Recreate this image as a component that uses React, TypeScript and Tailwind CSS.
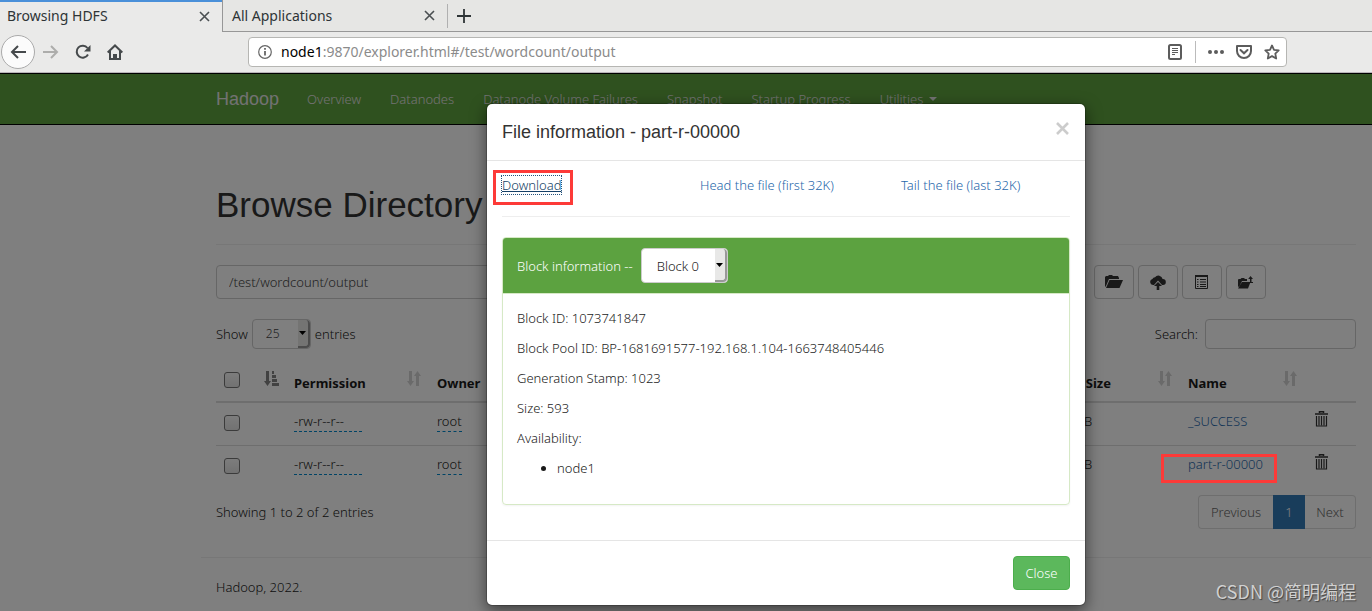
import React from "react";

const navLinks = [
  "Overview",
  "Datanodes",
  "Datanode Volume Failures",
  "Snapshot",
  "Startup Progress",
];

const columns = [
  { title: "Permission", width: "w-[143px]" },
  { title: "Owner", width: "" },
  { title: "Block Size", width: "w-[141px]" },
  { title: "Name", width: "w-[125px]" },
];

const files = [
  { name: "_SUCCESS", marked: false },
  { name: "part-r-00000", marked: true },
];

const blockInfo = [
  "Block ID: 1073741847",
  "Block Pool ID: BP-1681691577-192.168.1.104-1663748405446",
  "Generation Stamp: 1023",
  "Size: 593",
  "Availability:",
];

const SortIcon = ({ active }: { active?: boolean }) =>
  active ? (
    <svg width="15" height="15" viewBox="0 0 15 15" fill="#333" className="opacity-60">
      <path d="M2 0h3v10h2l-3.500 5L0 10h2zM8 0h2v3H8zM8 4h4v3H8zM8 8h5v3H8zM8 12h7v3H8z" />
    </svg>
  ) : (
    <svg width="14" height="15" viewBox="0 0 14 15" fill="#333" className="opacity-20">
      <path d="M2 0h3v10h2l-3.500 5L0 10h2zM9 15h3V5h2l-3.500-5L7 5h2z" />
    </svg>
  );

const TrashIcon = () => (
  <svg width="13" height="16" viewBox="0 0 13 16" fill="none" stroke="#333">
    <path d="M4.500 2V.75h4V2" strokeWidth="1.500" />
    <path d="M0 3h13" strokeWidth="1.500" />
    <path d="M1.500 5v10h10V5" strokeWidth="1.200" />
    <path d="M4 5v9.500M6.500 5v9.500M9 5v9.500" strokeWidth="1.200" />
  </svg>
);

const toolButtons = [
  {
    label: "Create directory",
    icon: (
      <svg width="18" height="14" viewBox="0 0 18 14" fill="#333">
        <path d="M0 12V2l1-1h2l1-1h3l1 1h5l1 2v1H4L1 11zM4.500 5H18l-3.500 8H1z" />
      </svg>
    ),
  },
  {
    label: "Upload files",
    icon: (
      <svg width="16" height="15" viewBox="0 0 16 15" fill="#333">
        <path d="M3 10a3 3 0 0 1-.6-5.900A3 3 0 0 1 5 2.200 4.300 4.300 0 0 1 12.600 4 3 3 0 0 1 13 10h-1L8 5.500 4 10z" />
        <path d="M8 7l4 4H9.300v4H6.700v-4H4z" />
      </svg>
    ),
  },
  {
    label: "Cut and paste",
    icon: (
      <svg width="13" height="14" viewBox="0 0 13 14">
        <path d="M.5 .5h12v13H.5z" fill="none" stroke="#333" />
        <path d="M0 0h13v2H0z" fill="#333" />
        <path d="M2 4.500h1.500M5 4.500h6M2 7h1.500M5 7h6M2 9.500h1.500M5 9.500h6M2 11.500h1.500M5 11.500h6" stroke="#333" />
      </svg>
    ),
  },
  {
    label: "Parent directory",
    icon: (
      <svg width="15" height="13" viewBox="0 0 15 13" fill="#333">
        <path d="M0 11V3.500L1 3h1.500l1-1H6l1 1h2v2H4L1.500 10zM4 6h8.500L10 12.500H0z" />
        <path d="M12.500 0L15 3h-1.500v3H15v1h-3V3h-1.800z" />
      </svg>
    ),
  },
];

const SelectArrow = () => (
  <span className="pointer-events-none absolute inset-y-px right-px flex w-3 items-center justify-center rounded-r-sm border-r-2 border-b-2 border-[#999] bg-[#e8e8e7]">
    <svg width="7" height="4" viewBox="0 0 7 4">
      <path d="M0 0h7L3.500 4z" />
    </svg>
  </span>
);

const CloseGlyph = () => (
  <svg width="11" height="11" viewBox="0 0 11 11" stroke="#4a4f51" strokeWidth="1.600">
    <path d="M1 1l9 9M10 1l-9 9" />
  </svg>
);

const BrowserChrome = () => (
  <header className="shrink-0 bg-[#eaeae9] font-['Noto_Sans',sans-serif] text-sm text-[#2e3436]">
    <div className="flex h-8">
      <div className="flex w-[222px] items-center justify-between border-t-2 border-[#4a90d9] pr-3 pb-[2px] pl-[7px]">
        <span>Browsing HDFS</span>
        <button aria-label="Close tab">
          <CloseGlyph />
        </button>
      </div>
      <div className="flex flex-1 items-center border-b border-l border-[#979797] bg-[#e6e6e4]">
        <div className="flex w-56 items-center justify-between pr-3 pl-[9px]">
          <span>All Applications</span>
          <button aria-label="Close tab">
            <CloseGlyph />
          </button>
        </div>
        <button aria-label="New tab" className="flex h-6 items-center border-l border-[#b0b0b0] pl-[9px]">
          <svg width="14" height="14" viewBox="0 0 14 14" stroke="#2e3436" strokeWidth="1.800">
            <path d="M7 0v14M0 7h14" />
          </svg>
        </button>
      </div>
    </div>
    <div className="flex h-[41px] items-center border-b border-[#b8b4b8] pr-[85px]">
      <div className="flex w-[248px] items-center pl-px">
        <button
          aria-label="Back"
          className="flex size-[34px] items-center justify-center rounded-full border border-[#aaa] bg-[#fbfbfb]"
        >
          <svg width="16" height="14" viewBox="0 0 16 14" fill="none" stroke="#45494b" strokeWidth="2">
            <path d="M16 7H2M8 1L2 7l6 6" />
          </svg>
        </button>
        <button aria-label="Forward" className="ml-2">
          <svg width="16" height="14" viewBox="0 0 16 14" fill="none" stroke="#adadab" strokeWidth="2">
            <path d="M0 7h14M8 1l6 6-6 6" />
          </svg>
        </button>
        <button aria-label="Reload" className="ml-4">
          <svg width="16" height="16" viewBox="0 0 16 16" fill="none" stroke="#45494b" strokeWidth="2">
            <path d="M13 10.500A6 6 0 1 1 12.500 4" />
            <path d="M15.500 1v6.500H9z" fill="#45494b" stroke="none" />
          </svg>
        </button>
        <button aria-label="Home" className="ml-4">
          <svg width="16" height="16" viewBox="0 0 16 16" fill="none" stroke="#45494b" strokeWidth="2">
            <path d="M.7 8.500L8 1.500l7.300 7M3 7v8h10V7" />
            <path d="M7 15v-4h2v4" />
          </svg>
        </button>
      </div>
      <div className="flex h-[30px] flex-1 items-center rounded-sm border border-[#b6b6b3] bg-white pr-[6px] pl-[9px]">
        <svg width="14" height="14" viewBox="0 0 14 14" fill="none" stroke="#666">
          <circle cx="7" cy="7" r="6.300" strokeWidth="1.200" />
          <path d="M7 6v4.500M7 3v1.800" strokeWidth="1.800" />
        </svg>
        <p className="flex-1 pl-[9px] text-[#8b8b8b]">
          <span className="text-black">node1</span>:9870/explorer.html#/test/wordcount/output
        </p>
        <svg width="14" height="16" viewBox="0 0 14 16" fill="none" stroke="#5c5c5c">
          <rect x="1" y="1" width="12" height="14" rx="1.500" strokeWidth="2" />
          <path d="M4 4.500h6M4 6.500h6M4 8.500h6M4 10.500h3" />
        </svg>
        <span className="mr-3 ml-[13px] h-[22px] w-px bg-[#bbb]" />
        <svg width="16" height="4" viewBox="0 0 16 4" fill="#5c5c5c">
          <circle cx="2" cy="2" r="2" />
          <circle cx="8" cy="2" r="2" />
          <circle cx="14" cy="2" r="2" />
        </svg>
        <svg className="ml-3" width="16" height="14" viewBox="0 0 16 14" fill="none" stroke="#5c5c5c" strokeWidth="2">
          <path d="M1 1h14v5a7 7 0 0 1-14 0z" strokeLinejoin="round" />
          <path d="M4.500 5L8 8.300 11.500 5" strokeLinecap="round" />
        </svg>
        <svg className="ml-3" width="16" height="16" viewBox="0 0 16 16" fill="none" stroke="#5c5c5c" strokeWidth="1.800">
          <path
            d="M8 1.500l2 4.300 4.700.6-3.400 3.300.9 4.800L8 12.100l-4.200 2.400.9-4.800L1.300 6.400 6 5.800z"
            strokeLinejoin="round"
          />
        </svg>
      </div>
    </div>
  </header>
);

const Checkbox = ({ label }: { label: string }) => (
  <input
    type="checkbox"
    aria-label={label}
    className="block size-4 appearance-none rounded-[3px] border border-[#777] bg-linear-to-b from-[#fafafa] to-[#e4e4e4]"
  />
);

const FileTable = () => (
  <table className="mt-4 w-full table-fixed border-separate border-spacing-0 text-left">
    <colgroup>
      <col className="w-8" />
      <col className="w-[38px]" />
      {columns.map((column) => (
        <col key={column.title} className={column.width} />
      ))}
      <col className="w-[51px]" />
    </colgroup>
    <thead>
      <tr>
        <th className="border-b-2 border-[#ddd] px-2 pt-[7px] align-top">
          <Checkbox label="Select all" />
        </th>
        <th className="border-b-2 border-[#ddd] pt-[6px] pl-4 align-top">
          <SortIcon active />
        </th>
        {columns.map((column) => (
          <th key={column.title} className="border-b-2 border-[#ddd] px-2 pb-2 align-bottom font-bold">
            <div className="flex items-end justify-between">
              <span className="pt-2 whitespace-nowrap">{column.title}</span>
              <span className="self-start pt-[6px]">
                <SortIcon />
              </span>
            </div>
          </th>
        ))}
        <th className="border-b-2 border-[#ddd]" />
      </tr>
    </thead>
    <tbody>
      {files.map((file, index) => {
        const cell = index === 0 ? "px-2 pt-2 h-[42px]" : "px-2 pt-2 h-[43px] border-t border-[#ddd]";
        return (
          <tr key={file.name} className="align-top">
            <td className={cell}>
              <div className="pt-1">
                <Checkbox label={`Select ${file.name}`} />
              </div>
            </td>
            <td className={cell} />
            <td className={cell}>
              <span className="inline-block min-w-[68px] border-b border-dashed border-[#0088cc]">-rw-r--r--</span>
            </td>
            <td className={cell}>
              <span className="inline-block border-b border-dashed border-[#0088cc]">root</span>
            </td>
            <td className={cell}>128 MB</td>
            <td className={cell}>
              <span className="relative inline-block">
                <a href="#file" className="text-[#1f68ab]">
                  {file.name}
                </a>
                {file.marked && (
                  <span className="absolute top-0 -left-[27px] z-20 h-[29px] w-[116px] border-3 border-[#fd3a38]" />
                )}
              </span>
            </td>
            <td className={cell}>
              <button aria-label={`Delete ${file.name}`} className="pl-[2px]">
                <TrashIcon />
              </button>
            </td>
          </tr>
        );
      })}
    </tbody>
  </table>
);

const Explorer = () => (
  <>
    <nav className="flex h-[52px] items-center border-y border-black bg-[#5fa33e] pl-[216px] text-[#e4e4e4]">
      <a href="#home" className="mr-7 font-['Liberation_Sans',sans-serif] text-lg font-normal">
        Hadoop
      </a>
      <div className="flex gap-[29px] whitespace-nowrap">
        {navLinks.map((link) => (
          <a key={link} href="#nav">
            {link}
          </a>
        ))}
        <a href="#utilities" className="flex items-center gap-[6px]">
          Utilities
          <svg width="8" height="4" viewBox="0 0 8 4" fill="currentColor">
            <path d="M0 0h8L4 4z" />
          </svg>
        </a>
      </div>
    </nav>
    <div className="pr-px pl-[201px]">
      <main className="px-[15px]">
        <h1 className="border-b border-[#eee] pt-[60px] pb-[19px] font-['Liberation_Sans',sans-serif] text-[35px] leading-10 font-normal text-[#333]">
          Browse Directory
        </h1>
        <div className="-mx-[15px] mt-5 flex">
          <div className="w-3/4 px-[15px]">
            <input
              aria-label="Directory"
              defaultValue="/test/wordcount/output"
              className="h-[34px] w-full rounded border border-[#ccc] px-3 text-[#444]"
            />
          </div>
          <div className="flex w-1/4 gap-1 pl-[15px]">
            {toolButtons.map((button) => (
              <button
                key={button.label}
                aria-label={button.label}
                className="flex h-[34px] w-10 items-center justify-center rounded border border-[#ccc]"
              >
                {button.icon}
              </button>
            ))}
          </div>
        </div>
        <div className="mt-5 flex items-center justify-between">
          <label className="flex items-center gap-1">
            Show
            <span className="relative">
              <select className="h-[30px] w-[59px] appearance-none rounded-sm border border-[#ccc] pl-[13px] text-xs text-[#444]">
                <option>25</option>
              </select>
              <SelectArrow />
            </span>
            entries
          </label>
          <label className="flex items-center gap-[7px]">
            Search:
            <input type="search" className="h-[30px] w-[151px] rounded-sm border border-[#ccc] px-2" />
          </label>
        </div>
        <FileTable />
        <div className="mt-[7px] flex items-center justify-between">
          <p>Showing 1 to 2 of 2 entries</p>
          <div className="flex h-[34px] text-[#666]">
            <button className="w-[75px] rounded-l border border-r-0 border-[#ddd]">Previous</button>
            <button className="w-8 bg-[#337ab7] text-white">1</button>
            <button className="w-[51px] rounded-r border border-l-0 border-[#ddd]">Next</button>
          </div>
        </div>
      </main>
      <footer className="mt-7 border-t border-[#eee] px-[15px] pt-[19px]">
        <p>Hadoop, 2022.</p>
      </footer>
    </div>
  </>
);

const FileModal = () => (
  <div className="absolute inset-0 z-10 flex items-start justify-center bg-black/50 pt-[30px] pl-[200px]">
    <div
      role="dialog"
      aria-label="File information"
      className="w-[600px] rounded-md border border-black/20 bg-white bg-clip-padding shadow-[0_5px_15px_rgba(0,0,0,0.5)]"
    >
      <div className="flex h-[57px] items-center justify-between border-b border-[#e5e5e5] px-[15px]">
        <h4 className="font-['Liberation_Sans',sans-serif] text-lg font-normal text-[#333]">
          File information - part-r-00000
        </h4>
        <button aria-label="Close dialog" className="mr-px mb-2">
          <svg width="13" height="13" viewBox="0 0 13 13" stroke="#ccc" strokeWidth="2.600">
            <path d="M1 1l11 11M12 1L1 12" />
          </svg>
        </button>
      </div>
      <div className="px-[15px] pt-[14px] pb-[15px]">
        <div className="flex border-b border-[#eee] pb-[21px]">
          <div className="w-[198px]">
            <span className="relative inline-block">
              <a href="#download" className="text-[#153f66] underline outline-1 outline-dotted outline-[#23527c]">
                Download
              </a>
              <span className="absolute -top-[5px] -left-[9px] h-[35px] w-20 border-3 border-[#fd3a38]" />
            </span>
          </div>
          <a href="#head" className="w-[201px] text-[#1f68ab]">
            Head the file (first 32K)
          </a>
          <a href="#tail" className="text-[#1f68ab]">
            Tail the file (last 32K)
          </a>
        </div>
        <section className="mt-5 mb-5 overflow-hidden rounded border border-[#d6e9c6] shadow-xs">
          <div className="flex items-center gap-2 border-b border-[#d6e9c6] bg-[#5ca240] px-[14px] py-[10px] text-white">
            <label htmlFor="block">Block information --</label>
            <span className="relative">
              <select
                id="block"
                className="h-[35px] w-[87px] appearance-none rounded border border-[#ccc] bg-white pl-[15px] text-[#1a1a1a]"
              >
                <option>Block 0</option>
              </select>
              <SelectArrow />
            </span>
          </div>
          <div className="px-[14px] pt-[14px] pb-[26px]">
            {blockInfo.map((line) => (
              <p key={line} className="mb-[10px]">
                {line}
              </p>
            ))}
            <ul className="list-disc pl-10">
              <li>node1</li>
            </ul>
          </div>
        </section>
      </div>
      <div className="flex justify-end border-t border-[#e5e5e5] p-[15px]">
        <button className="h-[34px] w-[57px] rounded border border-[#4cae4c] bg-[#5cb85c] text-white">Close</button>
      </div>
    </div>
  </div>
);

const App: React.FC = () => {
  return (
    <div className="flex h-screen flex-col overflow-hidden">
      <BrowserChrome />
      <div className="relative flex-1 overflow-hidden bg-white font-['Noto_Sans',sans-serif] text-[13px] leading-5 font-light text-[#1a1a1a]">
        <Explorer />
        <FileModal />
        <p className="absolute right-4 bottom-2 z-20 font-['Noto_Sans_CJK_SC',sans-serif] text-lg leading-6 font-normal text-[#d0d0d0] [text-shadow:1px_1px_1px_#444]">
          CSDN @简明编程
        </p>
      </div>
    </div>
  );
};

export default App;
